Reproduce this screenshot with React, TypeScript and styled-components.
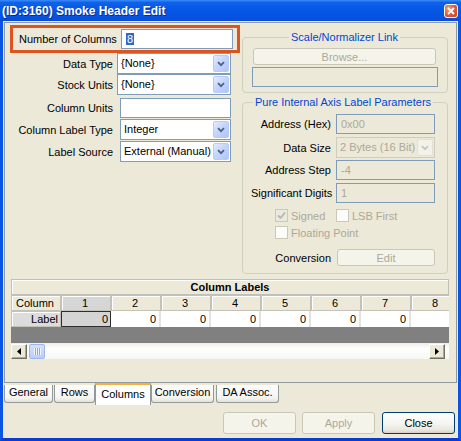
import React from 'react';
import styled, { createGlobalStyle } from 'styled-components';

const GlobalStyle = createGlobalStyle`
  html, body {
    margin: 0;
    padding: 0;
    background: #ECE9D8;
  }
  body {
    font-family: "Liberation Sans", Arial, sans-serif;
    font-size: 11px;
    color: #000;
  }
  * {
    box-sizing: border-box;
  }
`;

const Window = styled.div`
  width: 461px;
  height: 441px;
  display: flex;
  flex-direction: column;
  background: #ECE9D8;
  overflow: hidden;
`;

const TitleBar = styled.div`
  flex: none;
  height: 21px;
  display: flex;
  align-items: center;
  justify-content: space-between;
  padding: 0 3px 0 2px;
  background: linear-gradient(to bottom, #3C8CF8 0%, #0F61EA 12%, #0558E6 45%, #0553E0 80%, #0A4BD6 100%);
`;

const Title = styled.span`
  color: #fff;
  font: bold 12px "Liberation Sans", Arial, sans-serif;
  text-shadow: 1px 1px 0 #0B2A8C;
  white-space: nowrap;
`;

const CloseBox = styled.div`
  width: 14px;
  height: 14px;
  border: 1px solid #fff;
  border-radius: 3px;
  background: radial-gradient(circle at 30% 30%, #F2A38C 0%, #E0613E 45%, #C53E1A 100%);
  display: flex;
  align-items: center;
  justify-content: center;
`;

const Frame = styled.div`
  flex: 1;
  display: flex;
  flex-direction: column;
  border: 3px solid #0A55E4;
  border-top: none;
  border-bottom-color: #0A3CD4;
  padding: 1px 1px 0;
`;

const Pane = styled.div`
  flex: none;
  height: 361px;
  border: 1px solid #919B9C;
  padding: 2px 0 0 5px;
  display: flex;
  flex-direction: column;
`;

const TopArea = styled.div`
  display: flex;
  gap: 2px;
  align-items: flex-start;
`;

const LeftCol = styled.div`
  width: 230px;
  flex: none;
  display: flex;
  flex-direction: column;
`;

const RightCol = styled.div`
  width: 206px;
  flex: none;
  margin-top: 6px;
  display: flex;
  flex-direction: column;
`;

const Highlight = styled.div`
  height: 28px;
  border: 3px solid #DC5420;
  display: flex;
  align-items: center;
  padding: 0 4px 0 6px;
`;

const HighlightLabel = styled.span`
  flex: 1;
  white-space: nowrap;
`;

const FormRow = styled.div<{ $mt?: number; $h?: number; $pl?: number }>`
  display: flex;
  align-items: center;
  height: ${(p) => p.$h ?? 21}px;
  margin-top: ${(p) => p.$mt ?? 0}px;
  padding-left: ${(p) => p.$pl ?? 0}px;
`;

const RowLabel = styled.span<{ $w: number }>`
  flex: none;
  width: ${(p) => p.$w}px;
  text-align: right;
  white-space: nowrap;
`;

const TextBox = styled.div<{ $w: number; $ml?: number; $disabled?: boolean }>`
  flex: none;
  width: ${(p) => p.$w}px;
  height: 20px;
  margin-left: ${(p) => p.$ml ?? 0}px;
  border: 1px solid #7F9DB9;
  background: ${(p) => (p.$disabled ? '#ECE9D8' : '#FFFFFF')};
  color: ${(p) => (p.$disabled ? '#ACA899' : '#000')};
  padding-left: 4px;
  line-height: 18px;
  white-space: nowrap;
`;

const Selection = styled.span`
  background: #316AC5;
  color: #fff;
  padding: 0 1px;
`;

const ComboBox = styled.div<{ $w: number; $ml?: number; $disabled?: boolean }>`
  flex: none;
  width: ${(p) => p.$w}px;
  height: 21px;
  margin-left: ${(p) => p.$ml ?? 0}px;
  border: 1px solid ${(p) => (p.$disabled ? '#CFCCBF' : '#7F9DB9')};
  background: ${(p) => (p.$disabled ? '#ECE9D8' : '#FFFFFF')};
  color: ${(p) => (p.$disabled ? '#ACA899' : '#000')};
  display: flex;
  padding: 1px;
`;

const ComboValue = styled.span`
  flex: 1;
  padding-left: 2px;
  line-height: 17px;
  white-space: nowrap;
  overflow: hidden;
`;

const ComboButton = styled.span<{ $disabled?: boolean }>`
  flex: none;
  width: 16px;
  border-radius: 2px;
  border: 1px solid ${(p) => (p.$disabled ? '#E3E1D6' : '#B9CBF3')};
  background: ${(p) =>
    p.$disabled ? '#F2F1EA' : 'linear-gradient(135deg, #E4ECFE 0%, #C5D6FC 45%, #AFC5F6 100%)'};
  display: flex;
  align-items: center;
  justify-content: center;
`;

const Group = styled.fieldset<{ $mt: number; $pt: number; $pb: number; $pl: number; $pr: number }>`
  margin: ${(p) => p.$mt}px 0 0;
  min-width: 0;
  border: 1px solid #D0D0BF;
  border-radius: 4px;
  padding: ${(p) => `${p.$pt}px ${p.$pr}px ${p.$pb}px ${p.$pl}px`};
  display: flex;
  flex-direction: column;
`;

const GroupTitle = styled.legend`
  margin: 0 auto;
  padding: 0 2px;
  color: #0046D5;
  font-size: 11px;
  line-height: 13px;
`;

const PushButton = styled.button<{ $w: number; $h: number; $default?: boolean; $ml?: number }>`
  flex: none;
  width: ${(p) => p.$w}px;
  height: ${(p) => p.$h}px;
  margin-left: ${(p) => p.$ml ?? 0}px;
  padding: 0;
  font: 11px "Liberation Sans", Arial, sans-serif;
  border-radius: 3px;
  border: 1px solid ${(p) => (p.$default ? '#003C74' : '#C9C7BA')};
  background: ${(p) =>
    p.$default ? 'linear-gradient(#FFFFFF 0%, #F4F4F0 55%, #E8E7DF 85%, #D7D2C6 100%)' : '#F5F4EA'};
  color: ${(p) => (p.$default ? '#000' : '#ACA899')};
`;

const CheckRow = styled.div<{ $mt: number }>`
  display: flex;
  height: 13px;
  margin-top: ${(p) => p.$mt}px;
  padding-left: 24px;
`;

const CheckItem = styled.div<{ $w?: number }>`
  display: flex;
  align-items: center;
  width: ${(p) => (p.$w ? `${p.$w}px` : 'auto')};
  color: #ACA899;
  white-space: nowrap;
`;

const CheckBox = styled.span<{ $checked?: boolean }>`
  flex: none;
  width: 13px;
  height: 13px;
  margin-right: 3px;
  border: 1px solid #CAC8BB;
  background: ${(p) => (p.$checked ? '#EAE9E1' : '#FBFBF9')};
  display: flex;
  align-items: center;
  justify-content: center;
`;

const Sheet = styled.div`
  margin: 5px 0 0 1px;
  width: 438px;
  display: flex;
  flex-direction: column;
  overflow: hidden;
`;

const SheetTitle = styled.div`
  height: 16px;
  border: 1px solid #C2C0B4;
  box-shadow: inset 1px 1px 0 #fff;
  background: #ECE9D8;
  font-weight: bold;
  text-align: center;
  line-height: 14px;
`;

const SheetRow = styled.div<{ $mt?: number }>`
  height: 16px;
  margin-top: ${(p) => p.$mt ?? 0}px;
  display: flex;
  border-right: 1px solid #C2C0B4;
`;

const HeadCell = styled.div<{ $sel?: boolean; $align: 'center' | 'right'; $bg?: string }>`
  flex: none;
  width: 50px;
  border: 1px solid #C4C2B6;
  box-shadow: inset 1px 1px 0 #fff;
  background: ${(p) => (p.$sel ? '#D6D6D6' : p.$bg ?? '#ECE9D8')};
  text-align: ${(p) => p.$align};
  padding-right: 2px;
  line-height: 14px;
  white-space: nowrap;
`;

const ValueCell = styled.div<{ $sel?: boolean }>`
  flex: none;
  width: 50px;
  background: ${(p) => (p.$sel ? '#D4D4D4' : '#FFFFFF')};
  border: ${(p) => (p.$sel ? '1px solid #2E2E2E' : 'none')};
  border-right: ${(p) => (p.$sel ? '1px solid #2E2E2E' : '2px solid #E2E2E2')};
  text-align: right;
  padding-right: ${(p) => (p.$sel ? 2 : 3)}px;
  line-height: ${(p) => (p.$sel ? 14 : 16)}px;
`;

const GrayFill = styled.div`
  height: 16px;
  background: #808080;
`;

const HScroll = styled.div`
  height: 16px;
  display: flex;
  align-items: center;
  padding: 0 4px 0 0;
  background: linear-gradient(#EFEEE7 0%, #FFFFFF 35%, #F7F7F3 100%);
`;

const ScrollArrow = styled.div`
  flex: none;
  width: 16px;
  height: 15px;
  background: #ECE9D8;
  border: 1px solid;
  border-color: #FFFFFF #716F64 #716F64 #FFFFFF;
  box-shadow: inset -1px -1px 0 #ACA899;
  display: flex;
  align-items: center;
  justify-content: center;
`;

const Thumb = styled.div`
  flex: none;
  width: 16px;
  height: 15px;
  margin-left: 2px;
  border: 1px solid #9FB5EE;
  border-radius: 2px;
  background: linear-gradient(#D3E0FE, #BBCDF9);
  display: flex;
  align-items: center;
  justify-content: center;
`;

const Grip = styled.span`
  width: 7px;
  height: 7px;
  background: repeating-linear-gradient(90deg, #EEF4FE 0 1px, #8CA6E6 1px 2px);
`;

const Spacer = styled.div`
  flex: 1;
`;

const TabStrip = styled.div`
  flex: none;
  height: 22px;
  display: flex;
  align-items: flex-start;
`;

const Tab = styled.div<{ $w: number; $ml: number; $active?: boolean }>`
  flex: none;
  position: relative;
  z-index: ${(p) => (p.$active ? 1 : 0)};
  width: ${(p) => p.$w}px;
  margin-left: ${(p) => p.$ml}px;
  margin-top: ${(p) => (p.$active ? 0 : 2)}px;
  height: ${(p) => (p.$active ? 22 : 18)}px;
  border: 1px solid #919B9C;
  border-top: ${(p) => (p.$active ? '2px solid #F3B23C' : 'none')};
  border-bottom: ${(p) => (p.$active ? 'none' : '1px solid #919B9C')};
  border-radius: ${(p) => (p.$active ? '0' : '0 0 3px 3px')};
  background: ${(p) =>
    p.$active ? '#FFFFFF' : 'linear-gradient(#FDFDFD 0%, #F5F4EF 75%, #E4E1D5 100%)'};
  text-align: center;
  line-height: ${(p) => (p.$active ? 19 : 15)}px;
  white-space: nowrap;
`;

const ButtonBar = styled.div`
  flex: none;
  margin-top: 7px;
  display: flex;
  justify-content: flex-end;
  padding-right: 2px;
`;

const Chevron = ({ color }: { color: string }) => (
  <svg width="8" height="6" viewBox="0 0 8 6">
    <path d="M1 1.2L4 4.2L7 1.2" fill="none" stroke={color} strokeWidth="1.8" />
  </svg>
);

const Combo = ({ value, w, ml, disabled }: { value: string; w: number; ml?: number; disabled?: boolean }) => (
  <ComboBox $w={w} $ml={ml} $disabled={disabled}>
    <ComboValue>{value}</ComboValue>
    <ComboButton $disabled={disabled}>
      <Chevron color={disabled ? '#C9C7BA' : '#4D6185'} />
    </ComboButton>
  </ComboBox>
);

const leftRows = [
  { label: 'Data Type', combo: true, value: '{None}', mt: 0, ml: 4, w: 114 },
  { label: 'Stock Units', combo: true, value: '{None}', mt: 0, ml: 4, w: 114 },
  { label: 'Column Units', combo: false, value: '', mt: 2, ml: 7, w: 111 },
  { label: 'Column Label Type', combo: true, value: 'Integer', mt: 1, ml: 7, w: 111 },
  { label: 'Label Source', combo: true, value: 'External (Manual)', mt: 1, ml: 7, w: 111 },
];

const columns = [1, 2, 3, 4, 5, 6, 7, 8];

export default function App() {
  return (
    <>
      <GlobalStyle />
      <Window>
        <TitleBar>
          <Title>(ID:3160) Smoke Header Edit</Title>
          <CloseBox>
            <svg width="8" height="8" viewBox="0 0 8 8">
              <path d="M1 1L7 7M7 1L1 7" stroke="#fff" strokeWidth="1.8" />
            </svg>
          </CloseBox>
        </TitleBar>
        <Frame>
          <Pane>
            <TopArea>
              <LeftCol>
                <Highlight>
                  <HighlightLabel>Number of Columns</HighlightLabel>
                  <TextBox $w={112}>
                    <Selection>8</Selection>
                  </TextBox>
                </Highlight>
                {leftRows.map((r) => (
                  <FormRow key={r.label} $mt={r.mt}>
                    <RowLabel $w={103}>{r.label}</RowLabel>
                    {r.combo ? (
                      <Combo value={r.value} w={r.w} ml={r.ml} />
                    ) : (
                      <TextBox $w={r.w} $ml={r.ml}>{r.value}</TextBox>
                    )}
                  </FormRow>
                ))}
              </LeftCol>
              <RightCol>
                <Group $mt={0} $pt={4} $pb={5} $pl={10} $pr={11}>
                  <GroupTitle>Scale/Normalizer Link</GroupTitle>
                  <PushButton $w={183} $h={17}>Browse...</PushButton>
                  <FormRow $mt={2} $h={20}>
                    <TextBox $w={186} $ml={-1} $disabled />
                  </FormRow>
                </Group>
                <Group $mt={3} $pt={5} $pb={7} $pl={8} $pr={12}>
                  <GroupTitle>Pure Internal Axis Label Parameters</GroupTitle>
                  <FormRow $h={20}>
                    <RowLabel $w={80}>Address (Hex)</RowLabel>
                    <TextBox $w={99} $ml={5} $disabled>0x00</TextBox>
                  </FormRow>
                  <FormRow $mt={3}>
                    <RowLabel $w={80}>Data Size</RowLabel>
                    <Combo value="2 Bytes (16 Bit)" w={99} ml={5} disabled />
                  </FormRow>
                  <FormRow $mt={2} $h={20}>
                    <RowLabel $w={80}>Address Step</RowLabel>
                    <TextBox $w={99} $ml={5} $disabled>-4</TextBox>
                  </FormRow>
                  <FormRow $mt={3} $h={20}>
                    <RowLabel $w={80}>Significant Digits</RowLabel>
                    <TextBox $w={99} $ml={5} $disabled>1</TextBox>
                  </FormRow>
                  <CheckRow $mt={6}>
                    <CheckItem $w={61}>
                      <CheckBox $checked>
                        <svg width="9" height="9" viewBox="0 0 9 9">
                          <path d="M1 4.5L3.5 7L8 1.5" fill="none" stroke="#B9B6A8" strokeWidth="1.8" />
                        </svg>
                      </CheckBox>
                      Signed
                    </CheckItem>
                    <CheckItem>
                      <CheckBox />
                      LSB First
                    </CheckItem>
                  </CheckRow>
                  <CheckRow $mt={4}>
                    <CheckItem>
                      <CheckBox />
                      Floating Point
                    </CheckItem>
                  </CheckRow>
                  <FormRow $mt={10} $h={17}>
                    <RowLabel $w={80}>Conversion</RowLabel>
                    <PushButton $w={98} $h={17} $ml={6}>Edit</PushButton>
                  </FormRow>
                </Group>
              </RightCol>
            </TopArea>
            <Sheet>
              <SheetTitle>Column Labels</SheetTitle>
              <SheetRow $mt={0}>
                <HeadCell $align="center">Column</HeadCell>
                {columns.map((c) => (
                  <HeadCell key={c} $align="center" $sel={c === 1}>
                    {c}
                  </HeadCell>
                ))}
              </SheetRow>
              <SheetRow $mt={0}>
                <HeadCell $align="right" $bg="#DCDCDC">Label</HeadCell>
                {columns.map((c) => (
                  <ValueCell key={c} $sel={c === 1}>
                    {c < 8 ? '0' : ''}
                  </ValueCell>
                ))}
              </SheetRow>
              <GrayFill />
              <HScroll>
                <ScrollArrow>
                  <svg width="4" height="7" viewBox="0 0 4 7">
                    <path d="M4 0L0 3.5L4 7Z" fill="#000" />
                  </svg>
                </ScrollArrow>
                <Thumb>
                  <Grip />
                </Thumb>
                <Spacer />
                <ScrollArrow>
                  <svg width="4" height="7" viewBox="0 0 4 7">
                    <path d="M0 0L4 3.5L0 7Z" fill="#000" />
                  </svg>
                </ScrollArrow>
              </HScroll>
            </Sheet>
          </Pane>
          <TabStrip>
            <Tab $w={49} $ml={0}>General</Tab>
            <Tab $w={41} $ml={1}>Rows</Tab>
            <Tab $w={56} $ml={0} $active>Columns</Tab>
            <Tab $w={63} $ml={0}>Conversion</Tab>
            <Tab $w={63} $ml={2}>DA Assoc.</Tab>
          </TabStrip>
          <ButtonBar>
            <PushButton $w={73} $h={22}>OK</PushButton>
            <PushButton $w={73} $h={22} $ml={6}>Apply</PushButton>
            <PushButton $w={73} $h={22} $ml={7} $default>Close</PushButton>
          </ButtonBar>
        </Frame>
      </Window>
    </>
  );
}
